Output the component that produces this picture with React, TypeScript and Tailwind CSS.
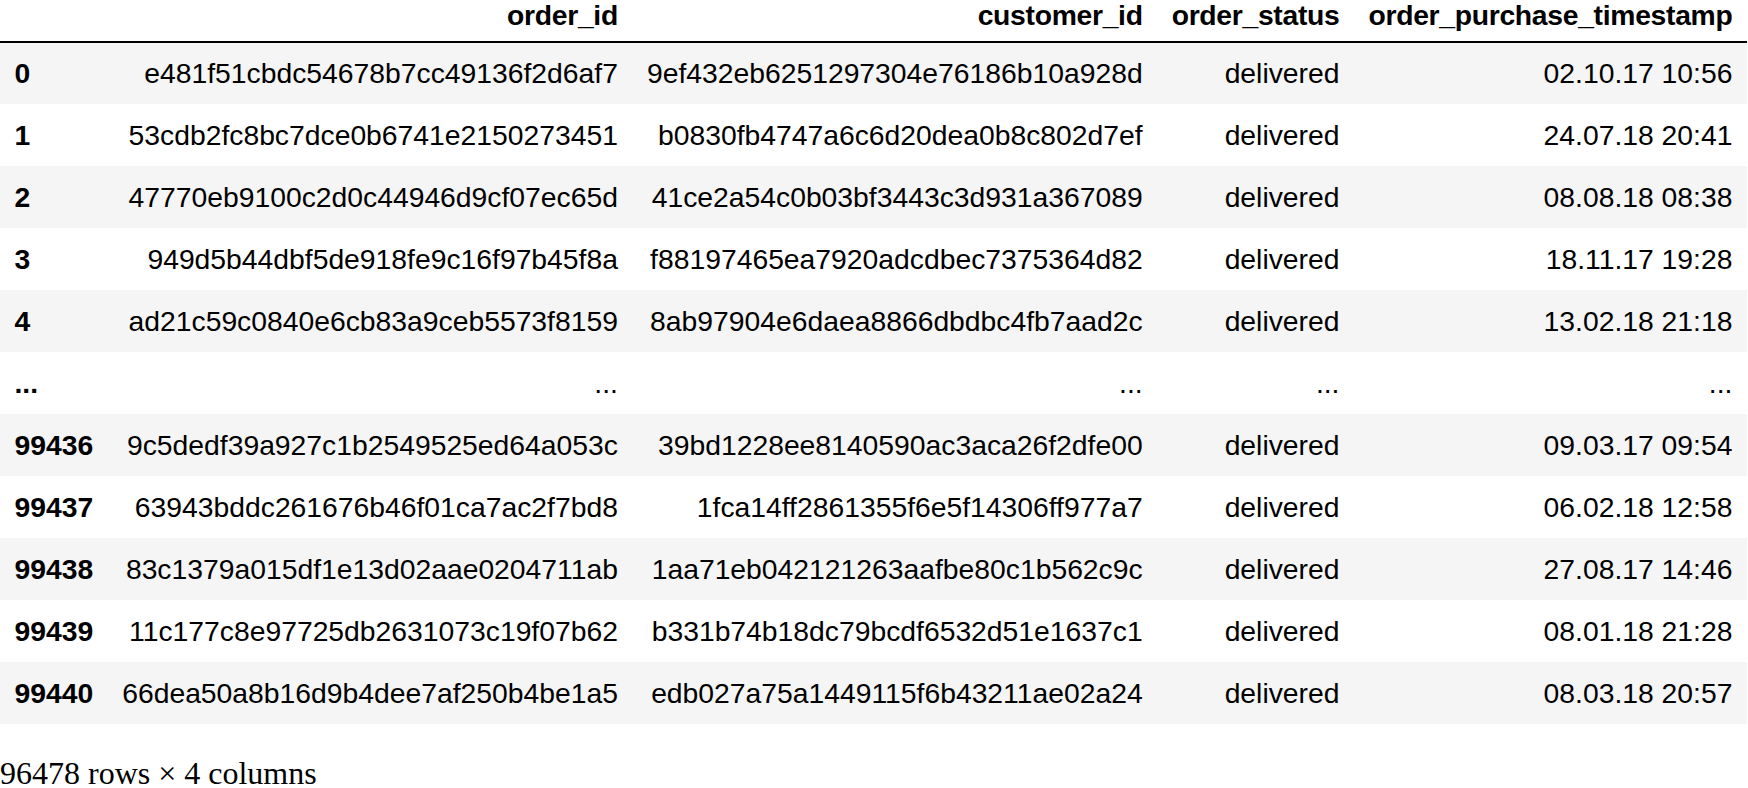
const columns = ["order_id", "customer_id", "order_status", "order_purchase_timestamp"];

type Row = [string, string, string, string, string];

const rows: Row[] = [
  ["0", "e481f51cbdc54678b7cc49136f2d6af7", "9ef432eb6251297304e76186b10a928d", "delivered", "02.10.17 10:56"],
  ["1", "53cdb2fc8bc7dce0b6741e2150273451", "b0830fb4747a6c6d20dea0b8c802d7ef", "delivered", "24.07.18 20:41"],
  ["2", "47770eb9100c2d0c44946d9cf07ec65d", "41ce2a54c0b03bf3443c3d931a367089", "delivered", "08.08.18 08:38"],
  ["3", "949d5b44dbf5de918fe9c16f97b45f8a", "f88197465ea7920adcdbec7375364d82", "delivered", "18.11.17 19:28"],
  ["4", "ad21c59c0840e6cb83a9ceb5573f8159", "8ab97904e6daea8866dbdbc4fb7aad2c", "delivered", "13.02.18 21:18"],
  ["...", "...", "...", "...", "..."],
  ["99436", "9c5dedf39a927c1b2549525ed64a053c", "39bd1228ee8140590ac3aca26f2dfe00", "delivered", "09.03.17 09:54"],
  ["99437", "63943bddc261676b46f01ca7ac2f7bd8", "1fca14ff2861355f6e5f14306ff977a7", "delivered", "06.02.18 12:58"],
  ["99438", "83c1379a015df1e13d02aae0204711ab", "1aa71eb042121263aafbe80c1b562c9c", "delivered", "27.08.17 14:46"],
  ["99439", "11c177c8e97725db2631073c19f07b62", "b331b74b18dc79bcdf6532d51e1637c1", "delivered", "08.01.18 21:28"],
  ["99440", "66dea50a8b16d9b4dee7af250b4be1a5", "edb027a75a1449115f6b43211ae02a24", "delivered", "08.03.18 20:57"],
];

export default function App() {
  return (
    <div className="min-h-screen overflow-hidden bg-white text-black">
      <table className="mt-[-11px] border-collapse border-spacing-0 font-['Liberation_Sans',Arial,sans-serif] text-[28.3px]">
        <thead className="border-b-2 border-black">
          <tr>
            <th className="h-[53px] px-[14.5px] py-0 leading-[33px]"></th>
            {columns.map((c) => (
              <th
                key={c}
                className="h-[53px] px-[14.5px] py-0 text-right align-middle font-bold leading-[33px] tracking-[-0.3px] whitespace-nowrap"
              >
                {c}
              </th>
            ))}
          </tr>
        </thead>
        <tbody>
          {rows.map((r, i) => (
            <tr key={r[0]} className={i % 2 === 0 ? "bg-[#f5f5f5]" : "bg-white"}>
              <th className="h-[62px] px-[14.5px] py-0 text-left align-middle font-bold leading-[33px]">
                {r[0]}
              </th>
              {r.slice(1).map((v, j) => (
                <td key={j} className="h-[62px] px-[14.5px] py-0 text-right align-middle leading-[33px] whitespace-nowrap">
                  {v}
                </td>
              ))}
            </tr>
          ))}
        </tbody>
      </table>
      <p className="mt-[36px] font-['Liberation_Serif','Times_New_Roman',serif] text-[32px] leading-[26px]">
        96478 rows × 4 columns
      </p>
    </div>
  );
}
